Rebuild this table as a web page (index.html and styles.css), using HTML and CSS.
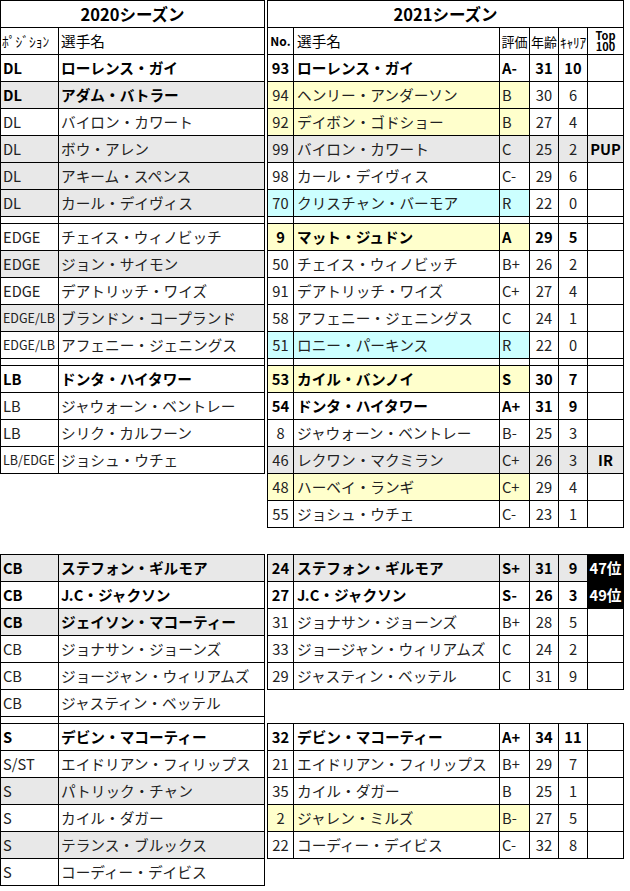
FILE: index.html
```html
<!DOCTYPE html>
<html lang="ja">
<head>
<meta charset="utf-8">
<title>2020 / 2021 シーズン</title>
<link rel="stylesheet" href="styles.css">
</head>
<body>
<div class="sheet">
  <div class="sec">
    <div class="grid left">
      <div class="row"><div class="c title">2020シーズン</div></div>
      <div class="row hd"><div class="c pos">ﾎﾟｼﾞｼｮﾝ</div><div class="c">選手名</div></div>
      <div class="row b"><div class="c">DL</div><div class="c">ローレンス・ガイ</div></div>
      <div class="row b g"><div class="c">DL</div><div class="c">アダム・バトラー</div></div>
      <div class="row"><div class="c">DL</div><div class="c">バイロン・カワート</div></div>
      <div class="row g"><div class="c">DL</div><div class="c">ボウ・アレン</div></div>
      <div class="row g"><div class="c">DL</div><div class="c">アキーム・スペンス</div></div>
      <div class="row g"><div class="c">DL</div><div class="c">カール・デイヴィス</div></div>
      <div class="row gap"><div class="c"></div><div class="c"></div></div>
      <div class="row"><div class="c">EDGE</div><div class="c">チェイス・ウィノビッチ</div></div>
      <div class="row g"><div class="c">EDGE</div><div class="c">ジョン・サイモン</div></div>
      <div class="row"><div class="c">EDGE</div><div class="c">デアトリッチ・ワイズ</div></div>
      <div class="row g"><div class="c sm">EDGE/LB</div><div class="c">ブランドン・コープランド</div></div>
      <div class="row"><div class="c sm">EDGE/LB</div><div class="c">アフェニー・ジェニングス</div></div>
      <div class="row gap"><div class="c"></div><div class="c"></div></div>
      <div class="row b"><div class="c">LB</div><div class="c">ドンタ・ハイタワー</div></div>
      <div class="row"><div class="c">LB</div><div class="c">ジャウォーン・ベントレー</div></div>
      <div class="row"><div class="c">LB</div><div class="c">シリク・カルフーン</div></div>
      <div class="row"><div class="c sm">LB/EDGE</div><div class="c">ジョシュ・ウチェ</div></div>
    </div>
    <div class="grid right">
      <div class="row"><div class="c title">2021シーズン</div></div>
      <div class="row hd"><div class="c no">No.</div><div class="c">選手名</div><div class="c sub">評価</div><div class="c sub">年齢</div><div class="c sub">ｷｬﾘｱ</div><div class="c top"><span>Top 100</span></div></div>
      <div class="row b"><div class="c">93</div><div class="c">ローレンス・ガイ</div><div class="c">A-</div><div class="c">31</div><div class="c">10</div><div class="c"></div></div>
      <div class="row"><div class="c y">94</div><div class="c y">ヘンリー・アンダーソン</div><div class="c y">B</div><div class="c">30</div><div class="c">6</div><div class="c"></div></div>
      <div class="row"><div class="c y">92</div><div class="c y">デイボン・ゴドショー</div><div class="c y">B</div><div class="c">27</div><div class="c">4</div><div class="c"></div></div>
      <div class="row g"><div class="c">99</div><div class="c">バイロン・カワート</div><div class="c">C</div><div class="c">25</div><div class="c">2</div><div class="c mark">PUP</div></div>
      <div class="row"><div class="c">98</div><div class="c">カール・デイヴィス</div><div class="c">C-</div><div class="c">29</div><div class="c">6</div><div class="c"></div></div>
      <div class="row"><div class="c cy">70</div><div class="c cy">クリスチャン・バーモア</div><div class="c cy">R</div><div class="c">22</div><div class="c">0</div><div class="c"></div></div>
      <div class="row gap"><div class="c"></div><div class="c"></div><div class="c"></div><div class="c"></div><div class="c"></div><div class="c"></div></div>
      <div class="row b"><div class="c y">9</div><div class="c y">マット・ジュドン</div><div class="c y">A</div><div class="c">29</div><div class="c">5</div><div class="c"></div></div>
      <div class="row"><div class="c">50</div><div class="c">チェイス・ウィノビッチ</div><div class="c">B+</div><div class="c">26</div><div class="c">2</div><div class="c"></div></div>
      <div class="row"><div class="c">91</div><div class="c">デアトリッチ・ワイズ</div><div class="c">C+</div><div class="c">27</div><div class="c">4</div><div class="c"></div></div>
      <div class="row"><div class="c">58</div><div class="c">アフェニー・ジェニングス</div><div class="c">C</div><div class="c">24</div><div class="c">1</div><div class="c"></div></div>
      <div class="row"><div class="c cy">51</div><div class="c cy">ロニー・パーキンス</div><div class="c cy">R</div><div class="c">22</div><div class="c">0</div><div class="c"></div></div>
      <div class="row gap"><div class="c"></div><div class="c"></div><div class="c"></div><div class="c"></div><div class="c"></div><div class="c"></div></div>
      <div class="row b"><div class="c y">53</div><div class="c y">カイル・バンノイ</div><div class="c y">S</div><div class="c">30</div><div class="c">7</div><div class="c"></div></div>
      <div class="row b"><div class="c">54</div><div class="c">ドンタ・ハイタワー</div><div class="c">A+</div><div class="c">31</div><div class="c">9</div><div class="c"></div></div>
      <div class="row"><div class="c">8</div><div class="c">ジャウォーン・ベントレー</div><div class="c">B-</div><div class="c">25</div><div class="c">3</div><div class="c"></div></div>
      <div class="row g"><div class="c">46</div><div class="c">レクワン・マクミラン</div><div class="c">C+</div><div class="c">26</div><div class="c">3</div><div class="c mark">IR</div></div>
      <div class="row"><div class="c y">48</div><div class="c y">ハーベイ・ランギ</div><div class="c y">C+</div><div class="c">29</div><div class="c">4</div><div class="c"></div></div>
      <div class="row"><div class="c">55</div><div class="c">ジョシュ・ウチェ</div><div class="c">C-</div><div class="c">23</div><div class="c">1</div><div class="c"></div></div>
    </div>
  </div>

  <div class="sec sec2">
    <div class="grid left">
      <div class="row b g"><div class="c">CB</div><div class="c">ステフォン・ギルモア</div></div>
      <div class="row b"><div class="c">CB</div><div class="c">J.C・ジャクソン</div></div>
      <div class="row b g"><div class="c">CB</div><div class="c">ジェイソン・マコーティー</div></div>
      <div class="row"><div class="c">CB</div><div class="c">ジョナサン・ジョーンズ</div></div>
      <div class="row"><div class="c">CB</div><div class="c">ジョージャン・ウィリアムズ</div></div>
      <div class="row"><div class="c">CB</div><div class="c">ジャスティン・ベッテル</div></div>
      <div class="row gap"><div class="c"></div><div class="c"></div></div>
      <div class="row b"><div class="c">S</div><div class="c">デビン・マコーティー</div></div>
      <div class="row"><div class="c">S/ST</div><div class="c">エイドリアン・フィリップス</div></div>
      <div class="row g"><div class="c">S</div><div class="c">パトリック・チャン</div></div>
      <div class="row"><div class="c">S</div><div class="c">カイル・ダガー</div></div>
      <div class="row g"><div class="c">S</div><div class="c">テランス・ブルックス</div></div>
      <div class="row"><div class="c">S</div><div class="c">コーディー・デイビス</div></div>
    </div>
    <div class="stack">
      <div class="grid right">
        <div class="row b g"><div class="c">24</div><div class="c">ステフォン・ギルモア</div><div class="c">S+</div><div class="c">31</div><div class="c">9</div><div class="c blk">47位</div></div>
        <div class="row b"><div class="c">27</div><div class="c">J.C・ジャクソン</div><div class="c">S-</div><div class="c">26</div><div class="c">3</div><div class="c blk">49位</div></div>
        <div class="row"><div class="c">31</div><div class="c">ジョナサン・ジョーンズ</div><div class="c">B+</div><div class="c">28</div><div class="c">5</div><div class="c"></div></div>
        <div class="row"><div class="c">33</div><div class="c">ジョージャン・ウィリアムズ</div><div class="c">C</div><div class="c">24</div><div class="c">2</div><div class="c"></div></div>
        <div class="row"><div class="c">29</div><div class="c">ジャスティン・ベッテル</div><div class="c">C</div><div class="c">31</div><div class="c">9</div><div class="c"></div></div>
      </div>
      <div class="grid right">
        <div class="row b"><div class="c">32</div><div class="c">デビン・マコーティー</div><div class="c">A+</div><div class="c">34</div><div class="c">11</div><div class="c"></div></div>
        <div class="row"><div class="c">21</div><div class="c">エイドリアン・フィリップス</div><div class="c">B+</div><div class="c">29</div><div class="c">7</div><div class="c"></div></div>
        <div class="row"><div class="c">35</div><div class="c">カイル・ダガー</div><div class="c">B</div><div class="c">25</div><div class="c">1</div><div class="c"></div></div>
        <div class="row"><div class="c y">2</div><div class="c y">ジャレン・ミルズ</div><div class="c y">B-</div><div class="c">27</div><div class="c">5</div><div class="c"></div></div>
        <div class="row"><div class="c">22</div><div class="c">コーディー・デイビス</div><div class="c">C-</div><div class="c">32</div><div class="c">8</div><div class="c"></div></div>
      </div>
    </div>
  </div>
</div>
</body>
</html>
```

FILE: styles.css
```css
* { box-sizing: border-box; }
html, body { margin: 0; padding: 0; background: #fff; }
body {
  font-family: "Noto Sans CJK JP", "Noto Sans", sans-serif;
  font-size: 14.67px;
  color: #222;
}
.sheet { display: flex; flex-direction: column; }
.sec { display: flex; gap: 2px; align-items: flex-start; }
.sec2 { margin-top: 26px; }
.stack { display: flex; flex-direction: column; gap: 33px; }

.grid {
  display: grid;
  border-top: 1px solid #000;
  border-left: 1px solid #000;
}
.left { grid-template-columns: 58px 206px; }
.right { grid-template-columns: 26px 206px 30px 29px 29px 36px; }

.row { display: contents; }
.c {
  height: 27px;
  border-right: 1px solid #000;
  border-bottom: 1px solid #000;
  line-height: 26px;
  padding: 0 2px;
  white-space: nowrap;
  overflow: hidden;
}
.gap .c { height: 7px; }

.right .row > .c:nth-child(1),
.right .row > .c:nth-child(4),
.right .row > .c:nth-child(5),
.right .row > .c:nth-child(6) { text-align: center; padding: 0; }
.right .row > .c:nth-child(2) { padding-left: 3px; }

.title {
  grid-column: 1 / -1;
  text-align: center;
  font-size: 16.5px;
  font-weight: 700;
  color: #000;
}
.hd .c { color: #000; }
.hd .c.pos { font-size: 13.5px; padding-left: 1px; }
.hd .c.no { font-size: 12px; font-weight: 700; }
.hd .c.sub { font-size: 13px; text-align: center; padding: 0; line-height: 28px; }
.right .hd .c:nth-child(5) { font-size: 13.5px; letter-spacing: -0.3px; }
.hd .c.top {
  display: flex;
  justify-content: center;
  align-items: center;
  font-size: 11px;
  font-weight: 700;
}
.top span {
  display: block;
  width: 24px;
  white-space: normal;
  text-align: center;
  line-height: 11.5px;
}
.sm { font-size: 12.5px; }

.b .c { font-weight: 700; color: #000; }
.mark { font-weight: 700; color: #000; }
.g .c { background: #e8e8e8; }
.c.y { background: #ffffcc; }
.c.cy { background: #ccffff; }
.c.blk { background: #000; color: #fff; }
```
